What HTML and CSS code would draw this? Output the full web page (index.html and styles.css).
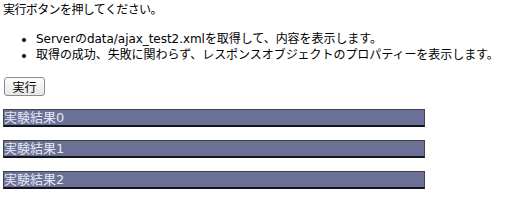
FILE: index.html
```html
<!DOCTYPE html>
<html lang="ja">
<head>
    <meta charset="UTF-8">
    <title>Ajax テスト2</title>
    <link rel="stylesheet" href="styles.css">
</head>
<body>

<p class="lead">実行ボタンを押してください。</p>
<ul class="notes">
    <li>Serverのdata/ajax_test2.xmlを取得して、内容を表示します。</li>
    <li>取得の成功、失敗に関わらず、レスポンスオブジェクトのプロパティーを表示します。</li>
</ul>
<p class="actions"><button type="button" id="run">実行</button></p>

<div class="result" id="result0">実験結果0</div>
<div class="result" id="result1">実験結果1</div>
<div class="result" id="result2">実験結果2</div>

</body>
</html>
```

FILE: styles.css
```css
body {
    font-family: "DejaVu Sans", "Noto Sans CJK JP", sans-serif;
    font-size: 12px;
    line-height: 16px;
    letter-spacing: -0.6px;
    color: #000;
    background-color: #fff;
    margin: 2px 3px;
}
.lead {
    margin: 0;
}
.notes {
    margin: 13px 0 0 0;
    padding-left: 33px;
    letter-spacing: -0.05px;
}
.actions {
    margin: 14px 0 0 0;
    line-height: 0;
}
button {
    font-family: "Noto Sans CJK JP", sans-serif;
    font-size: 12px;
    line-height: 15px;
    width: 41px;
    height: 19px;
    padding: 0;
    margin: 0 0 0 1px;
    color: #000;
    background: linear-gradient(#fdfdfd, #e6e6e6);
    border: 1px solid #8c8c8c;
    border-radius: 3px;
}
.result {
    width: 420px;
    height: 15px;
    line-height: 15px;
    margin-top: 13px;
    background-color: #6b7096;
    color: #e6e8f2;
    font-size: 13px;
    letter-spacing: 0;
    border: 1px solid #444;
    border-bottom: 2px solid #141420;
    white-space: nowrap;
}
```
